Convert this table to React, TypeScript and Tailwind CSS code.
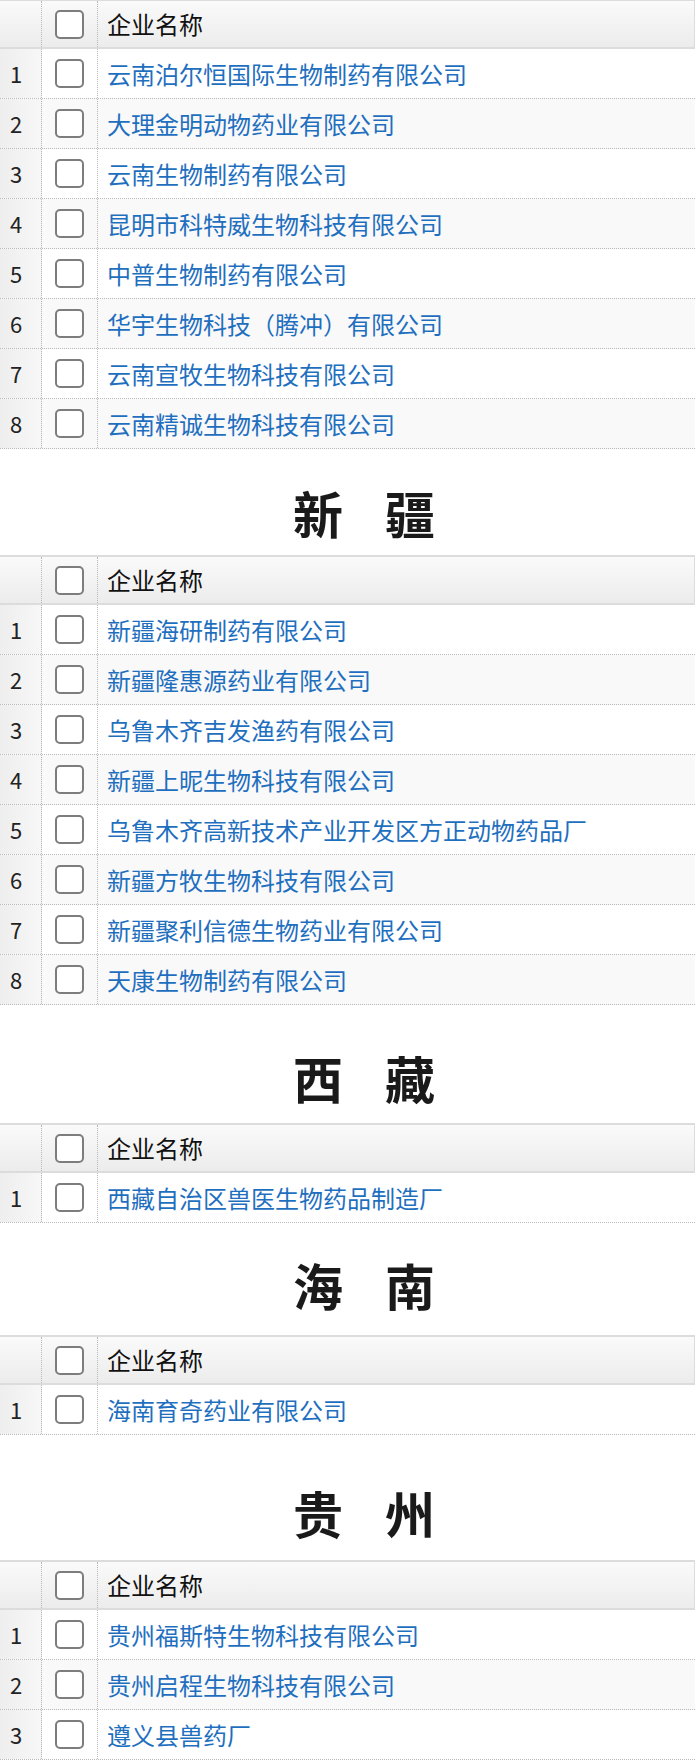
import React from 'react';
import clsx from 'clsx';

type Section = {
  title?: [string, string];
  headingClass?: string;
  tableClass?: string;
  rows: string[];
};

const sections: Section[] = [
  {
    tableClass: '-mt-px',
    rows: [
      '云南泊尔恒国际生物制药有限公司',
      '大理金明动物药业有限公司',
      '云南生物制药有限公司',
      '昆明市科特威生物科技有限公司',
      '中普生物制药有限公司',
      '华宇生物科技（腾冲）有限公司',
      '云南宣牧生物科技有限公司',
      '云南精诚生物科技有限公司',
    ],
  },
  {
    title: ['新', '疆'],
    headingClass: 'mt-[38px] mb-[18px]',
    rows: [
      '新疆海研制药有限公司',
      '新疆隆惠源药业有限公司',
      '乌鲁木齐吉发渔药有限公司',
      '新疆上昵生物科技有限公司',
      '乌鲁木齐高新技术产业开发区方正动物药品厂',
      '新疆方牧生物科技有限公司',
      '新疆聚利信德生物药业有限公司',
      '天康生物制药有限公司',
    ],
  },
  {
    title: ['西', '藏'],
    headingClass: 'mt-[47px] mb-[21px]',
    rows: ['西藏自治区兽医生物药品制造厂'],
  },
  {
    title: ['海', '南'],
    headingClass: 'mt-[36px] mb-[26px]',
    rows: ['海南育奇药业有限公司'],
  },
  {
    title: ['贵', '州'],
    headingClass: 'mt-[52px] mb-[23px]',
    rows: ['贵州福斯特生物科技有限公司', '贵州启程生物科技有限公司', '遵义县兽药厂'],
  },
];

const Checkbox = () => (
  <span className="block h-[29px] w-[29px] rounded-[5px] border-2 border-[#7d7d7d] bg-white" />
);

const Heading = ({ title, className }: { title: [string, string]; className?: string }) => (
  <div
    className={clsx(
      'flex h-[50px] items-center justify-center gap-[42px] pl-[30px] text-[50px] font-bold leading-[50px] text-[#1a1a1a]',
      className
    )}
  >
    <span>{title[0]}</span>
    <span>{title[1]}</span>
  </div>
);

const CompanyTable = ({ rows, className }: { rows: string[]; className?: string }) => (
  <div className={clsx('w-[695px]', className)}>
    <div className="flex h-[50px] border-y-2 border-r border-[#dcdcdc] bg-linear-to-b from-[#fafafa] to-[#ececec]">
      <div className="w-[42px] border-r border-dotted border-[#b8b8b8]" />
      <div className="flex w-[56px] items-center justify-center border-r border-dotted border-[#b8b8b8]">
        <Checkbox />
      </div>
      <div className="flex items-center pl-[9px] text-[24px] text-[#111]">企业名称</div>
    </div>
    {rows.map((name, i) => (
      <div
        key={name}
        className={clsx(
          'flex h-[50px] border-b border-dotted border-[#b8b8b8]',
          i % 2 === 1 ? 'bg-[#f9f9f9]' : 'bg-white'
        )}
      >
        <div className="flex w-[42px] items-center border-r border-dotted border-[#b8b8b8] bg-linear-to-r from-[#eeeeee] to-[#f7f7f7] pl-[10px] text-[22px] text-[#222]">
          {i + 1}
        </div>
        <div className="flex w-[56px] items-center justify-center border-r border-dotted border-[#b8b8b8]">
          <Checkbox />
        </div>
        <div className="flex items-center pl-[9px] text-[24px] text-[#1f6fbf]">{name}</div>
      </div>
    ))}
  </div>
);

export default function App() {
  return (
    <div className="min-h-[1763px] w-[698px] overflow-hidden bg-white font-['Noto_Sans_CJK_SC','Noto_Sans',sans-serif]">
      {sections.map((s, i) => (
        <React.Fragment key={i}>
          {s.title && <Heading title={s.title} className={s.headingClass} />}
          <CompanyTable rows={s.rows} className={s.tableClass} />
        </React.Fragment>
      ))}
    </div>
  );
}
